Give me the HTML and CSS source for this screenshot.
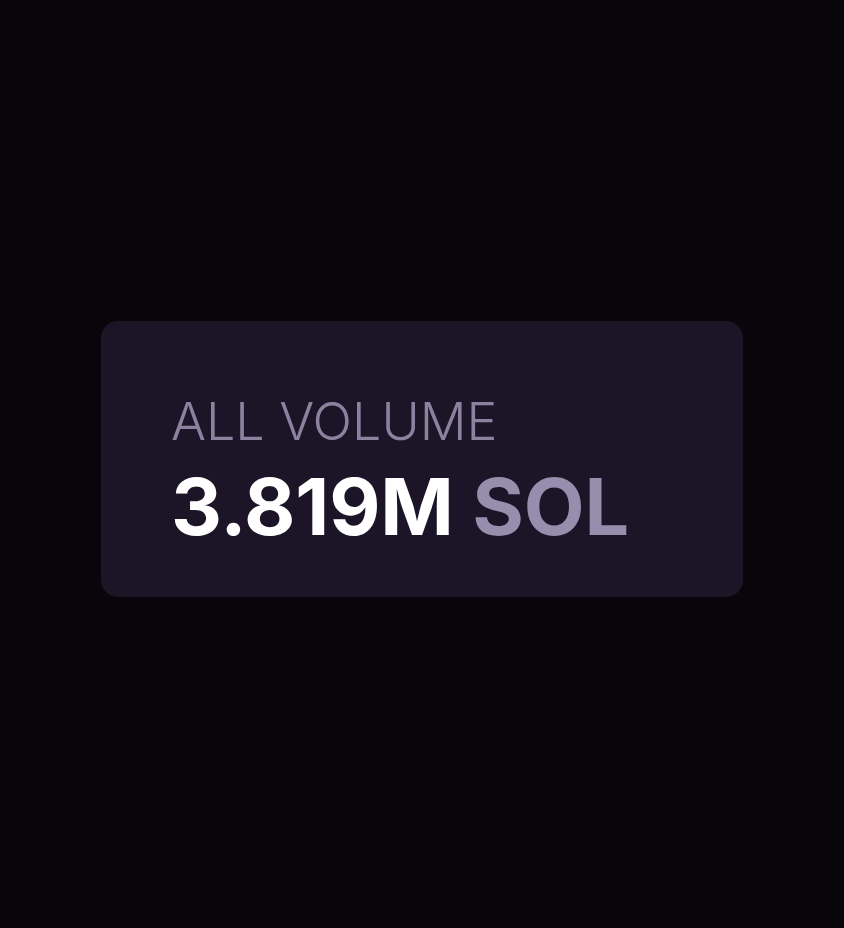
FILE: index.html
```html
<!DOCTYPE html>
<html lang="en">
<head>
  <meta charset="UTF-8" />
  <meta name="viewport" content="width=device-width, initial-scale=1" />
  <title>All Volume</title>
  <link rel="stylesheet" href="styles.css">
</head>
<body>
  <div class="stat-card">
    <p class="stat-label">ALL VOLUME</p>
    <p class="stat-value">3.819M <span class="unit">SOL</span></p>
  </div>
</body>
</html>
```

FILE: styles.css
```css
html, body {
  margin: 0;
  background-color: #08060b;
}
body {
  min-height: 928px;
  display: flex;
  justify-content: center;
  align-items: flex-start;
  padding-top: 321px;
  box-sizing: border-box;
  font-family: Inter, "Noto Sans", sans-serif;
}
.stat-card {
  width: 642px;
  height: 276px;
  box-sizing: border-box;
  padding: 75px 40px 0 70px;
  background-color: #1c1527;
  border-radius: 17px;
}
.stat-label {
  margin: 0;
  font-size: 52px;
  line-height: 1;
  font-weight: 300;
  color: #8c819f;
}
.stat-value {
  margin: 19px 0 0;
  font-size: 79px;
  line-height: 1;
  font-weight: 700;
  color: #ffffff;
  letter-spacing: -0.2px;
}
.unit {
  color: #978dac;
}
```
